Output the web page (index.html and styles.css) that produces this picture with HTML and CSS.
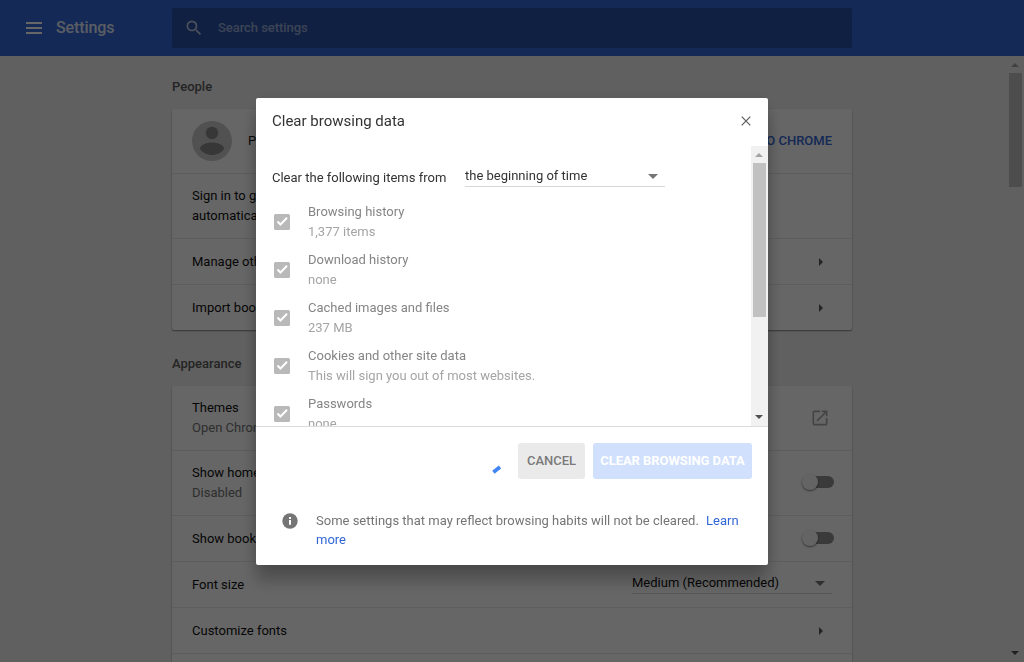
FILE: index.html
```html
<!DOCTYPE html>
<html lang="en">
<head>
<meta charset="utf-8">
<title>Settings</title>
<link rel="stylesheet" href="styles.css">
</head>
<body>
<div class="app">
  <header class="toolbar">
    <svg class="menu-icon" viewBox="0 0 16 12"><path d="M0 0h16v2H0zM0 5h16v2H0zM0 10h16v2H0z"/></svg>
    <h1 class="toolbar-title">Settings</h1>
    <div class="search">
      <svg class="search-icon" viewBox="0 0 24 24"><path d="M15.5 14h-.79l-.28-.27A6.471 6.471 0 0 0 16 9.5 6.5 6.5 0 1 0 9.5 16c1.61 0 3.09-.59 4.23-1.57l.27.28v.79l5 4.99L20.49 19l-4.99-5zm-6 0C7.01 14 5 11.99 5 9.5S7.01 5 9.5 5 14 7.01 14 9.5 11.99 14 9.5 14z"/></svg>
      <span>Search settings</span>
    </div>
  </header>
  <div class="viewport">
    <main class="content">
      <h2 class="section-title">People</h2>
      <section class="card people">
        <div class="row tall">
          <svg class="avatar" viewBox="0 0 40 40"><circle class="avatar-bg" cx="20" cy="20" r="20"/><circle cx="20" cy="12" r="6.2"/><path d="M8 28c0-4 6-6.500 12-6.500s12 2.500 12 6.500c-2.500 3.800-7 6-12 6s-9.500-2.200-12-6z"/></svg>
          <span class="grow profile">Person 1</span>
          <span class="sign-in">SIGN IN TO CHROME</span>
        </div>
        <div class="row tall"><p class="blurb">Sign in to get your bookmarks, history, passwords, and other settings on all your devices. You'll also<br>automatically be signed in to your Google services.</p></div>
        <div class="row"><span class="grow">Manage other people</span><i class="chevron"></i></div>
        <div class="row"><span class="grow">Import bookmarks and settings</span><i class="chevron"></i></div>
      </section>
      <h2 class="section-title appearance">Appearance</h2>
      <section class="card">
        <div class="row tall">
          <div class="grow">Themes<div class="secondary">Open Chrome Web Store</div></div>
          <svg class="external" viewBox="0 0 24 24"><path d="M19 19H5V5h7V3H5a2 2 0 0 0-2 2v14a2 2 0 0 0 2 2h14c1.100 0 2-.900 2-2v-7h-2v7zM14 3v2h3.590l-9.830 9.830 1.410 1.410L19 6.410V10h2V3h-7z"/></svg>
        </div>
        <div class="row tall">
          <div class="grow">Show home button<div class="secondary">Disabled</div></div>
          <span class="toggle"><i class="knob"></i></span>
        </div>
        <div class="row"><span class="grow">Show bookmarks bar</span><span class="toggle"><i class="knob"></i></span></div>
        <div class="row"><span class="grow">Font size</span><div class="select">Medium (Recommended)<i class="caret"></i></div></div>
        <div class="row"><span class="grow">Customize fonts</span><i class="chevron"></i></div>
        <div class="row"></div>
      </section>
    </main>
    <div class="scrollbar page-bar"><i class="arrow up"></i><i class="thumb"></i><i class="arrow down"></i></div>
  </div>
</div>

<div class="backdrop">
  <div class="dialog">
    <div class="dialog-head">
      <h2 class="dialog-title">Clear browsing data</h2>
      <svg class="close" viewBox="0 0 10 10"><path d="M.7.700 9.300 9.300M9.300.700.700 9.300"/></svg>
    </div>
    <div class="dialog-body">
      <div class="options">
        <div class="period"><span>Clear the following items from</span><div class="select">the beginning of time<i class="caret"></i></div></div>
        <div class="option"><svg class="check" viewBox="0 0 16 16"><rect width="16" height="16" rx="1.500"/><path d="M3.500 7.500l3 3 6.500-6.700"/></svg><div>Browsing history<div class="detail">1,377 items</div></div></div>
        <div class="option"><svg class="check" viewBox="0 0 16 16"><rect width="16" height="16" rx="1.500"/><path d="M3.500 7.500l3 3 6.500-6.700"/></svg><div>Download history<div class="detail">none</div></div></div>
        <div class="option"><svg class="check" viewBox="0 0 16 16"><rect width="16" height="16" rx="1.500"/><path d="M3.500 7.500l3 3 6.500-6.700"/></svg><div>Cached images and files<div class="detail">237 MB</div></div></div>
        <div class="option"><svg class="check" viewBox="0 0 16 16"><rect width="16" height="16" rx="1.500"/><path d="M3.500 7.500l3 3 6.500-6.700"/></svg><div>Cookies and other site data<div class="detail">This will sign you out of most websites.</div></div></div>
        <div class="option"><svg class="check" viewBox="0 0 16 16"><rect width="16" height="16" rx="1.500"/><path d="M3.500 7.500l3 3 6.500-6.700"/></svg><div>Passwords<div class="detail">none</div></div></div>
      </div>
      <div class="scrollbar dialog-bar"><i class="arrow up"></i><i class="thumb"></i><i class="arrow down"></i></div>
    </div>
    <div class="actions">
      <svg class="spinner" viewBox="0 0 28 28"><path d="M11.400 25.200Q14.400 22.800 18 20"/></svg>
      <button class="button cancel">CANCEL</button>
      <button class="button confirm">CLEAR BROWSING DATA</button>
    </div>
    <div class="note">
      <svg class="info" viewBox="0 0 16 16"><circle cx="8" cy="8" r="7.700"/><path d="M7 7h2v4.700H7zM7 4h2v2H7z"/></svg>
      <p class="note-text">Some settings that may reflect browsing habits will not be cleared. <a class="link">Learn more</a></p>
    </div>
  </div>
</div>
</body>
</html>
```
FILE: styles.css
```css
* { box-sizing: border-box; }
body {
  margin: 0;
  height: 662px;
  overflow: hidden;
  background: #f1f1f1;
  color: #111;
  font: 13px/20px Roboto, "Liberation Sans", sans-serif;
}
h1, h2, p { margin: 0; }
i { display: block; flex: none; }
svg { display: block; flex: none; }
.grow { flex: 1; }

.app { display: flex; flex-direction: column; height: 662px; }
.toolbar {
  display: flex;
  align-items: center;
  flex: none;
  height: 56px;
  padding-left: 26px;
  background: #3367d6;
  color: #fff;
}
.menu-icon { width: 16px; height: 12px; fill: #fff; }
.toolbar-title { width: 116px; margin-left: 14px; font-size: 16px; font-weight: 500; letter-spacing: -.12px; opacity: .85; }
.search {
  display: flex;
  align-items: center;
  width: 680px;
  height: 40px;
  padding-left: 12px;
  border-radius: 2px;
  background: rgba(0, 0, 0, .22);
  font-weight: 500;
}
.search span { margin-left: 14px; letter-spacing: -.06px; opacity: .5; }
.search-icon { width: 20px; height: 20px; fill: #fff; opacity: .7; }

.viewport { display: flex; flex: 1; min-height: 0; overflow: hidden; }
.content { width: 680px; margin-left: 172px; margin-right: 155px; flex: none; }
.section-title {
  padding-top: 21px;
  margin-bottom: 12px;
  color: #5a5a5a;
  font-size: 13px;
  font-weight: 500;
}
.appearance { padding-top: 24px; }
.card {
  border-radius: 2px;
  background: #fff;
  box-shadow: 0 1px 2px rgba(0, 0, 0, .35), 0 1px 1px rgba(0, 0, 0, .15);
}
.row {
  display: flex;
  align-items: center;
  height: 46px;
  padding: 0 20px;
  border-top: 1px solid #e8e8e8;
}
.row.tall { height: 65px; }
.row:first-child { height: 64px; border-top: 0; }
.avatar { width: 40px; height: 40px; fill: #8a8a8a; }
.avatar-bg { fill: #cacaca; }
.profile { padding-left: 16px; }
.sign-in { color: #3367d6; font-weight: 500; }
.blurb { white-space: nowrap; }
.chevron {
  width: 0;
  margin-right: 9px;
  border: 4px solid transparent;
  border-left-color: #5a5a5a;
  border-right: 0;
}
.secondary { color: #757575; }
.external { width: 20px; height: 20px; margin-right: 2px; fill: #ababab; }
.toggle { display: flex; align-items: center; width: 28px; height: 12px; margin: 0 -2px 2px 0; border-radius: 6px; background: #929292; }
.knob { width: 16px; height: 16px; margin-left: -4px; border-radius: 50%; background: #fafafa; box-shadow: 0 1px 2px rgba(0, 0, 0, .5); }
.select {
  display: flex;
  align-items: center;
  justify-content: space-between;
  width: 200px;
  height: 23px;
  padding: 2px 7px 0 0;
  border-bottom: 1px solid #d8d8d8;
}
.row .select { height: 22px; margin-top: -4px; }
.caret { width: 0; border: 5px solid transparent; border-top-color: #757575; border-bottom: 0; }

.scrollbar {
  display: flex;
  flex-direction: column;
  align-items: center;
  width: 17px;
  flex: none;
  background: #f1f1f1;
}
.arrow { width: 0; margin-right: 1px; border: 4px solid transparent; }
.up { margin-top: 7px; margin-bottom: 6px; border-top: 0; border-bottom-color: #a3a3a3; }
.down { margin-top: auto; margin-bottom: 7px; border-bottom: 0; border-top-color: #505050; }
.thumb { width: 13px; background: #c1c1c1; }
.page-bar .thumb { height: 114px; }
.dialog-bar .thumb { height: 154px; }

.backdrop {
  position: fixed;
  inset: 0;
  display: flex;
  justify-content: center;
  align-items: flex-start;
  padding-top: 98px;
  background: rgba(0, 0, 0, .6);
}
.dialog {
  display: flex;
  flex-direction: column;
  width: 512px;
  height: 467px;
  border-radius: 2px;
  background: #fff;
  color: #333;
  box-shadow: 0 0 16px rgba(0, 0, 0, .12), 0 16px 16px rgba(0, 0, 0, .24);
}
.dialog-head {
  display: flex;
  justify-content: space-between;
  height: 48px;
  flex: none;
  padding: 13px 17px 0 16px;
}
.dialog-title { font-size: 15px; font-weight: 400; }
.close { width: 10px; height: 10px; margin-top: 5px; stroke: #5a5a5a; stroke-width: 1.200; }
.dialog-body { display: flex; height: 281px; flex: none; border-bottom: 1px solid #dcdcdc; }
.options { flex: 1; padding: 18px 0 0 16px; overflow: hidden; }
.period { display: flex; height: 33px; }
.period > span { width: 193px; padding-top: 4px; }
.option { display: flex; height: 48px; padding: 5px 0 0 2px; color: #858585; }
.detail { color: #a5a5a5; }
.check { width: 16px; height: 16px; margin: 12px 18px 0 0; fill: #b9b9b9; }
.check path { fill: none; stroke: #fff; stroke-width: 2; }
.actions { display: flex; justify-content: flex-end; padding: 16px 16px 0; }
.spinner { width: 28px; height: 28px; margin: 4px 8px 0 0; }
.spinner path { fill: none; stroke: #4285f4; stroke-width: 3.800; }
.button {
  height: 36px;
  padding: 0;
  border: 0;
  border-radius: 3px;
  font: 500 13px/36px Roboto, sans-serif;
}
.cancel { width: 67px; margin-right: 8px; background: #eaeaea; color: #7a7a7a; }
.confirm { width: 159px; background: #d0e0fd; color: #fff; font-weight: 700; letter-spacing: -.05px; }
.note { display: flex; padding: 32px 16px 0 26px; color: #757575; }
.info { width: 16px; height: 16px; margin: 2px 18px 0 0; fill: #757575; }
.info path { fill: #fff; }
.note-text { line-height: 19px; }
.link { margin-left: 4px; color: #3367d6; }
```
